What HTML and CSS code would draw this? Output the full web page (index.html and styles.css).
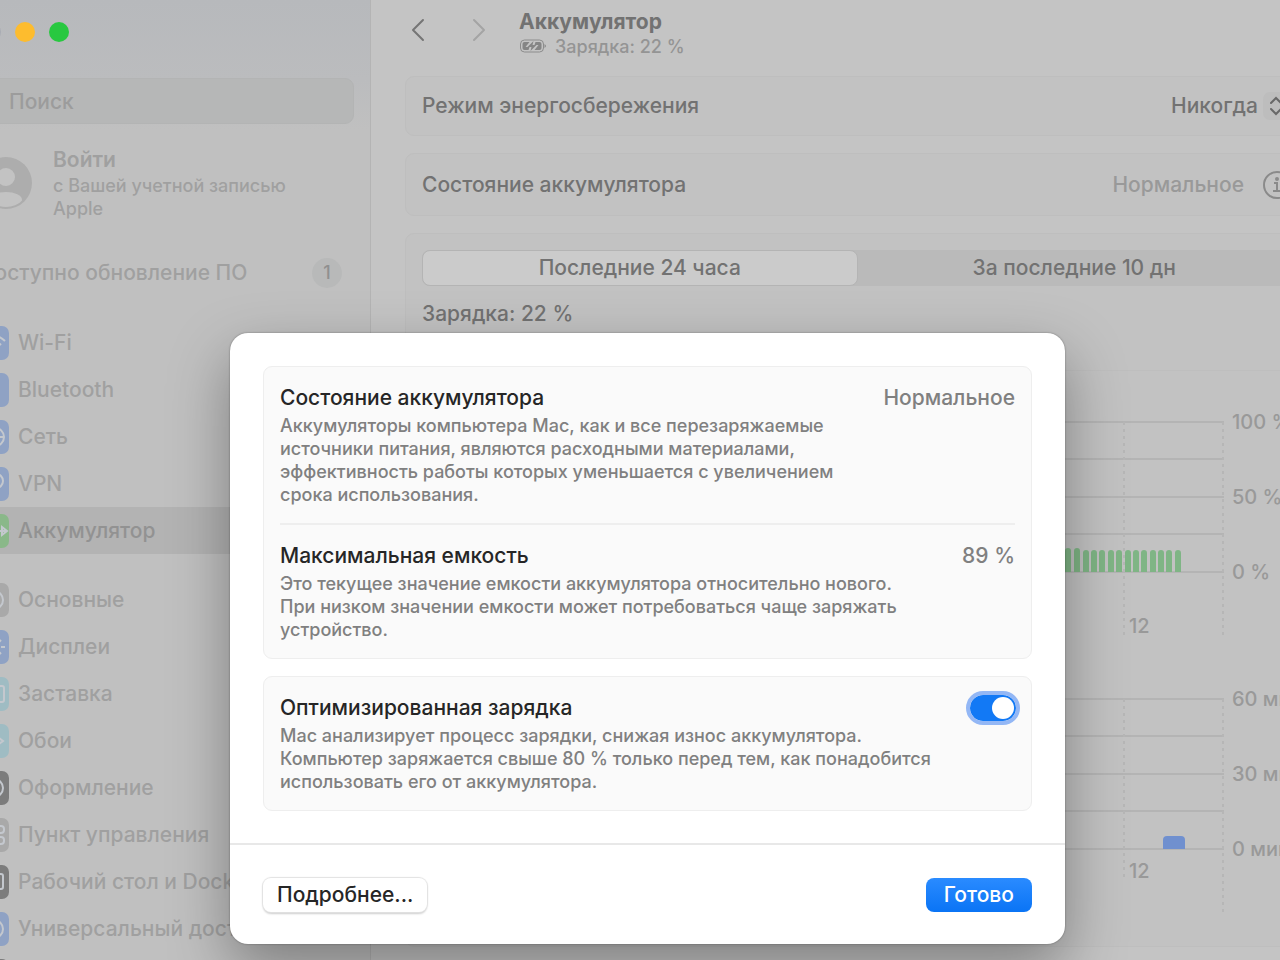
FILE: index.html
```
<!DOCTYPE html>
<html lang="ru">
<head>
    <meta charset="UTF-8">
    <meta name="viewport" content="width=device-width, initial-scale=1.0">
    <title>Аккумулятор</title>
    <link rel="stylesheet" href="styles.css">
</head>
<body>
    <div class="window">
        <aside class="sidebar">
            <div class="lights">
                <span class="light close"></span>
                <span class="light minimize"></span>
                <span class="light zoom"></span>
            </div>
            <input class="search" type="search" placeholder="Поиск" aria-label="Поиск">
            <a class="account" href="#">
                <svg class="avatar" viewBox="0 0 52 52">
                    <clipPath id="round"><circle cx="26" cy="26" r="24"/></clipPath>
                    <circle cx="26" cy="26" r="26" fill="#adadad"/>
                    <g clip-path="url(#round)" fill="#c3c3c3">
                        <circle cx="26" cy="20" r="9"/>
                        <ellipse cx="26" cy="43" rx="16" ry="8"/>
                    </g>
                </svg>
                <span>
                    <strong>Войти</strong>
                    <small>с Вашей учетной записью Apple</small>
                </span>
            </a>
            <a class="update" href="#">Доступно обновление ПО <span class="badge">1</span></a>
            <nav>
                <div class="group">
                    <a class="item" href="#"><svg class="icon blue" viewBox="0 0 28 34"><path d="M4 15q10-10 20 0M8 19q6-6 12 0M12 23q2-2 4 0"/></svg>Wi-Fi</a>
                    <a class="item" href="#"><svg class="icon blue" viewBox="0 0 28 34"><path d="M6 12l10 10-5 5V7l5 5L6 22"/></svg>Bluetooth</a>
                    <a class="item" href="#"><svg class="icon blue" viewBox="0 0 28 34"><circle cx="14" cy="17" r="9"/><path d="M5 17h18M14 8q-8 9 0 18q8-9 0-18"/></svg>Сеть</a>
                    <a class="item" href="#"><svg class="icon blue" viewBox="0 0 28 34"><circle cx="15" cy="14" r="7"/><path d="M12 20l-4 6"/></svg>VPN</a>
                    <a class="item active" href="#"><svg class="icon green" viewBox="0 0 28 34"><path d="M3 17h22M21 13v8l5-4z"/></svg>Аккумулятор</a>
                </div>
                <div class="group">
                    <a class="item" href="#"><svg class="icon gray" viewBox="0 0 28 34"><circle cx="13" cy="17" r="9"/><circle cx="13" cy="17" r="4"/></svg>Основные</a>
                    <a class="item" href="#"><svg class="icon blue" viewBox="0 0 28 34"><circle cx="13" cy="17" r="5"/><path d="M13 6v3M13 25v3M3 17h3M20 17h4M6 10l2 2M18 22l2 2M6 24l2-2M18 12l2-2"/></svg>Дисплеи</a>
                    <a class="item" href="#"><svg class="icon cyan" viewBox="0 0 28 34"><rect x="5" y="9" width="18" height="16" rx="2"/></svg>Заставка</a>
                    <a class="item" href="#"><svg class="icon cyan" viewBox="0 0 28 34"><circle cx="11" cy="17" r="4"/><path d="M11 6v7M11 21v7M1 17h6M18 14l4 3-4 3z"/></svg>Обои</a>
                    <a class="item" href="#"><svg class="icon dark" viewBox="0 0 28 34"><circle cx="13" cy="17" r="9"/><path d="M13 8v18"/></svg>Оформление</a>
                    <a class="item" href="#"><svg class="icon gray" viewBox="0 0 28 34"><rect x="4" y="8" width="19" height="7" rx="3"/><rect x="4" y="19" width="19" height="7" rx="3"/></svg>Пункт управления</a>
                    <a class="item" href="#"><svg class="icon dark" viewBox="0 0 28 34"><rect x="4" y="9" width="18" height="15" rx="2"/><path d="M8 21h11"/></svg>Рабочий стол и Dock</a>
                    <a class="item" href="#"><svg class="icon blue" viewBox="0 0 28 34"><circle cx="13" cy="17" r="9"/><path d="M8 14h10M13 14v5l-3 5M13 19l3 5"/></svg>Универсальный доступ</a>
                    <a class="item" href="#"><svg class="icon dark" viewBox="0 0 28 34"><circle cx="14" cy="17" r="9"/></svg>Siri</a>
                </div>
            </nav>
        </aside>

        <main class="content">
            <header class="toolbar">
                <button class="nav-btn" aria-label="Назад"><svg viewBox="0 0 14 24"><path d="M12 2L2 12l10 10"/></svg></button>
                <button class="nav-btn next" aria-label="Вперед"><svg viewBox="0 0 14 24"><path d="M2 2l10 10L2 22"/></svg></button>
                <div class="heading">
                    <h1>Аккумулятор</h1>
                    <p>
                        <svg class="battery" viewBox="0 0 27 14">
                            <rect x="1" y="1" width="23" height="12" rx="4" fill="none" stroke="#8c8c8c" stroke-width="1"/>
                            <path d="M5 3h5l-4 5h4l-1 3H5q-2 0-2-2V5q0-2 2-2zM16 3h4q2 0 2 2v4q0 2-2 2h-5l4-5h-4z" fill="#858585"/>
                            <path d="M14 2L8 8h4l-1 4 6-6h-4z" fill="#858585"/>
                            <path d="M25 5q3 2 0 4z" fill="#8c8c8c"/>
                        </svg>
                        Зарядка: 22 %
                    </p>
                </div>
            </header>

            <section class="card row">
                <label for="mode">Режим энергосбережения</label>
                <span class="picker">
                    <select id="mode"><option>Никогда</option></select>
                    <svg viewBox="0 0 28 28"><path d="M8 11l5-5 5 5M8 17l5 5 5-5"/></svg>
                </span>
            </section>

            <section class="card row health">
                <span>Состояние аккумулятора</span>
                <span class="muted">Нормальное</span>
                <button class="info" aria-label="Подробнее о состоянии">
                    <svg viewBox="0 0 28 28"><circle cx="14" cy="14" r="13"/><path d="M11 12h3v8M10 20h8"/><circle cx="14" cy="8" r="1"/></svg>
                </button>
            </section>

            <section class="card usage">
                <div class="segments">
                    <button class="on">Последние 24 часа</button>
                    <button>За последние 10 дн</button>
                </div>
                <p class="charge">Зарядка: 22 %</p>
                <hr>
                <div class="chart">
                    <svg viewBox="0 0 802 214" preserveAspectRatio="xMaxYMin slice">
                        <path class="grid" d="M0 1h802M0 38h802M0 76h802M0 113h802M0 151h802"/>
                        <path class="dots" d="M702 1v213M801 1v213"/>
                        <path class="bars" d="M643 151v-21a3 3 0 0 1 6 0v21zM652 151v-21a3 3 0 0 1 6 0v21zM661 151v-19a3 3 0 0 1 6 0v19zM669 151v-19a3 3 0 0 1 6 0v19zM677 151v-19a3 3 0 0 1 6 0v19zM686 151v-19a3 3 0 0 1 6 0v19zM694 151v-19a3 3 0 0 1 6 0v19zM703 151v-19a3 3 0 0 1 6 0v19zM711 151v-19a3 3 0 0 1 6 0v19zM719 151v-19a3 3 0 0 1 6 0v19zM728 151v-19a3 3 0 0 1 6 0v19zM736 151v-19a3 3 0 0 1 6 0v19zM744 151v-19a3 3 0 0 1 6 0v19zM753 151v-19a3 3 0 0 1 6 0v19z"/>
                        <text x="707" y="212">12</text>
                    </svg>
                    <div class="axis"><span>100 %</span><span>50 %</span><span>0 %</span></div>
                </div>
                <div class="chart">
                    <svg viewBox="0 0 802 214" preserveAspectRatio="xMaxYMin slice">
                        <path class="grid" d="M0 1h802M0 38h802M0 76h802M0 113h802M0 151h802"/>
                        <path class="dots" d="M702 1v180M801 1v213"/>
                        <path class="screen" d="M741 151v-9a4 4 0 0 1 4-4h14a4 4 0 0 1 4 4v9z"/>
                        <text x="707" y="180">12</text>
                    </svg>
                    <div class="axis"><span>60 мин</span><span>30 мин</span><span>0 мин</span></div>
                </div>
            </section>
        </main>

        <div class="overlay">
            <div class="dialog" role="dialog" aria-label="Состояние аккумулятора">
                <div class="dialog-body">
                    <section class="panel">
                        <div class="detail">
                            <div class="title"><h2>Состояние аккумулятора</h2><span>Нормальное</span></div>
                            <p>Аккумуляторы компьютера Mac, как и все перезаряжаемые<br>источники питания, являются расходными материалами,<br>эффективность работы которых уменьшается с увеличением<br>срока использования.</p>
                        </div>
                        <div class="detail">
                            <div class="title"><h2>Максимальная емкость</h2><span>89 %</span></div>
                            <p>Это текущее значение емкости аккумулятора относительно нового.<br>При низком значении емкости может потребоваться чаще заряжать<br>устройство.</p>
                        </div>
                    </section>
                    <section class="panel">
                        <div class="detail">
                            <div class="title"><h2><label for="optimized">Оптимизированная зарядка</label></h2><input class="switch" type="checkbox" id="optimized" checked></div>
                            <p>Mac анализирует процесс зарядки, снижая износ аккумулятора.<br>Компьютер заряжается свыше 80 % только перед тем, как понадобится<br>использовать его от аккумулятора.</p>
                        </div>
                    </section>
                </div>
                <footer>
                    <button class="btn">Подробнее...</button>
                    <button class="btn primary">Готово</button>
                </footer>
            </div>
        </div>
    </div>
</body>
</html>
```
FILE: styles.css
```
* {
    box-sizing: border-box;
}

body {
    margin: 0;
    height: 100vh;
    overflow: hidden;
    font-family: Inter, "Liberation Sans", sans-serif;
    font-size: 21px;
    font-weight: 500;
    line-height: 28px;
    color: #727272;
    background: #c4c4c4;
}

h1, h2, p {
    margin: 0;
    font-size: inherit;
}

a {
    color: inherit;
    text-decoration: none;
}

button, input, select {
    font: inherit;
    color: inherit;
}

button {
    border: none;
    padding: 0;
    background: none;
}

/* the window is wider than the screen and hangs over both sides */
.window {
    position: relative;
    display: flex;
    min-height: 100vh;
    margin: 0 -64px 0 -49px;
}

.sidebar {
    width: 420px;
    flex: none;
    padding: 22px 16px 0;
    border-right: 1px solid #b4b4b4;
    background: linear-gradient(#b7b9bc 0, #bbbcbe 80px, #c0c0c0 130px);
    color: #a0a0a0;
}

.lights {
    display: flex;
    gap: 14px;
    padding-left: 14px;
    margin-bottom: 36px;
}

.light {
    width: 20px;
    height: 20px;
    border-radius: 50%;
}

.close {
    background: #b7b9be;
    border: 1px solid #a9acb3;
}

.minimize {
    background: #fdbc2e;
}

.zoom {
    background: #28c840;
}

.search {
    display: block;
    width: 100%;
    height: 46px;
    padding: 0 41px;
    border: 1px solid #b3b4b4;
    border-radius: 9px;
    background: #b6b7b7;
}

.search::placeholder {
    color: #9c9c9c;
    opacity: 1;
}

.account {
    display: flex;
    align-items: center;
    gap: 21px;
    padding: 0 40px 0 13px;
    margin-top: 22px;
}

.avatar {
    width: 52px;
    height: 52px;
    flex: none;
}

.account strong,
.account small {
    display: block;
}

.account strong {
    font-weight: 600;
}

.account small {
    font-size: 18px;
    line-height: 23px;
}

.update {
    display: flex;
    justify-content: space-between;
    align-items: center;
    padding: 0 12px 0 10px;
    margin: 38px 0 31px;
}

.badge {
    width: 30px;
    height: 30px;
    line-height: 30px;
    border-radius: 50%;
    background: #b8b9b9;
    color: #909090;
    font-size: 18px;
    text-align: center;
}

.group {
    margin-bottom: 22px;
}

.item {
    display: flex;
    align-items: center;
    gap: 9px;
    height: 47px;
    padding-left: 14px;
    border-radius: 9px;
    white-space: nowrap;
}

.item.active {
    background: #b3b3b3;
    color: #929292;
}

.icon {
    width: 28px;
    height: 34px;
    border-radius: 7px;
    fill: none;
    stroke: #c4c8ce;
    stroke-width: 2;
}

.blue {
    background: #8fa2c4;
}

.green {
    background: #8ab889;
}

.cyan {
    background: #9fbcc3;
}

.gray {
    background: #a9a9a9;
}

.dark {
    background: #7c7c7c;
}

.content {
    flex: 1;
    min-width: 0;
    padding: 0 36px 15px 34px;
    background: #c4c4c4;
}

.toolbar {
    display: flex;
    align-items: center;
    height: 60px;
    margin-bottom: 16px;
}

.nav-btn {
    width: 61px;
    padding-left: 6px;
    text-align: left;
}

.nav-btn svg {
    display: block;
    width: 14px;
    height: 24px;
    fill: none;
    stroke: #757575;
    stroke-width: 2;
    stroke-linecap: round;
    stroke-linejoin: round;
}

.nav-btn.next {
    width: 53px;
}

.nav-btn.next svg {
    stroke: #a4a4a4;
}

.heading {
    padding-top: 6px;
}

.heading h1 {
    line-height: 26px;
    font-weight: 700;
}

.heading p {
    display: flex;
    align-items: center;
    gap: 8px;
    font-size: 18px;
    line-height: 23px;
    color: #949494;
}

.battery {
    width: 28px;
    height: 14px;
}

.card {
    padding: 16px;
    margin-bottom: 17px;
    border: 1px solid #bebebe;
    border-radius: 9px;
    background: #c2c2c2;
}

.row {
    display: flex;
    align-items: center;
    justify-content: space-between;
    height: 60px;
}

.health {
    height: 63px;
}

.picker {
    display: grid;
    align-items: center;
}

.picker select,
.picker svg {
    grid-area: 1 / 1;
}

.picker select {
    appearance: none;
    border: none;
    padding: 0 33px 0 0;
    background: none;
}

.picker svg {
    justify-self: end;
    width: 28px;
    height: 28px;
    border-radius: 7px;
    background: #bdbdbd;
    fill: none;
    stroke: #686868;
    stroke-width: 2;
    stroke-linecap: round;
    pointer-events: none;
}

.muted {
    margin-left: auto;
    margin-right: 19px;
    color: #999999;
}

.info svg {
    display: block;
    width: 28px;
    height: 28px;
    fill: none;
    stroke: #8a8a8a;
    stroke-width: 2;
}

.usage {
    height: 714px;
    margin: 0;
}

.segments {
    display: flex;
    height: 36px;
    border-radius: 8px;
    background: #bababa;
}

.segments button {
    flex: 1;
}

.segments .on {
    border: 1px solid #b4b4b4;
    border-radius: 8px;
    background: #cbcbcb;
}

.charge {
    margin-top: 14px;
}

.usage hr {
    margin: 42px 0 50px;
    border: none;
    border-top: 1px solid #bebebe;
}

.chart {
    display: flex;
    height: 214px;
    margin-bottom: 63px;
}

.chart svg {
    flex: 1;
    min-width: 0;
    height: 214px;
}

.chart text {
    fill: #999999;
    font-size: 20px;
}

.grid {
    stroke: #b4b4b4;
    stroke-width: 2;
}

.dots {
    stroke: #b6b6b6;
    stroke-width: 2;
    stroke-dasharray: 3 4;
}

.bars {
    fill: #7fb585;
}

.screen {
    fill: #7090cf;
}

.axis {
    display: flex;
    flex-direction: column;
    justify-content: space-between;
    width: 67px;
    height: 178px;
    margin-top: -13px;
    padding-left: 8px;
    font-size: 20px;
    color: #999999;
    white-space: nowrap;
}

.overlay {
    position: absolute;
    top: 333px;
    left: 0;
    right: 0;
    display: flex;
    justify-content: center;
}

.dialog {
    width: 835px;
    border-radius: 18px;
    background: #ffffff;
    box-shadow: 0 0 2px rgba(0, 0, 0, 0.4), 0 24px 60px rgba(0, 0, 0, 0.35);
}

.dialog-body {
    display: grid;
    gap: 17px;
    padding: 33px 33px 32px;
    border-bottom: 2px solid #e8e8e8;
}

.panel {
    padding: 0 16px;
    border: 1px solid #eeeeee;
    border-radius: 9px;
    background: #fafafa;
}

.detail {
    padding: 17px 0;
}

.detail + .detail {
    border-top: 2px solid #eeeeee;
}

.title {
    display: flex;
    align-items: center;
    justify-content: space-between;
    color: #808080;
}

.title h2 {
    font-weight: 500;
    color: #262626;
}

.detail p {
    margin-top: 2px;
    font-size: 18px;
    line-height: 23px;
    color: #808080;
}

.switch {
    appearance: none;
    width: 46px;
    height: 26px;
    margin: 0 -1px 0 0;
    padding: 2px;
    border-radius: 13px;
    background: #1279f5;
    outline: 4px solid #93b7f5;
}

.switch::before {
    content: "";
    display: block;
    width: 22px;
    height: 22px;
    margin-left: auto;
    border-radius: 50%;
    background: #ffffff;
}

.dialog footer {
    display: flex;
    justify-content: space-between;
    padding: 33px 33px 32px;
}

.btn {
    height: 34px;
    padding: 0 14px;
    border-radius: 8px;
    background: #ffffff;
    box-shadow: 0 0 1px 1px #e2e2e2, 0 2px 2px #cfcfcf;
    color: #262626;
}

.btn.primary {
    padding: 0 18px;
    background: linear-gradient(#2a8bff, #0a74f5);
    box-shadow: none;
    color: #ffffff;
}
```
